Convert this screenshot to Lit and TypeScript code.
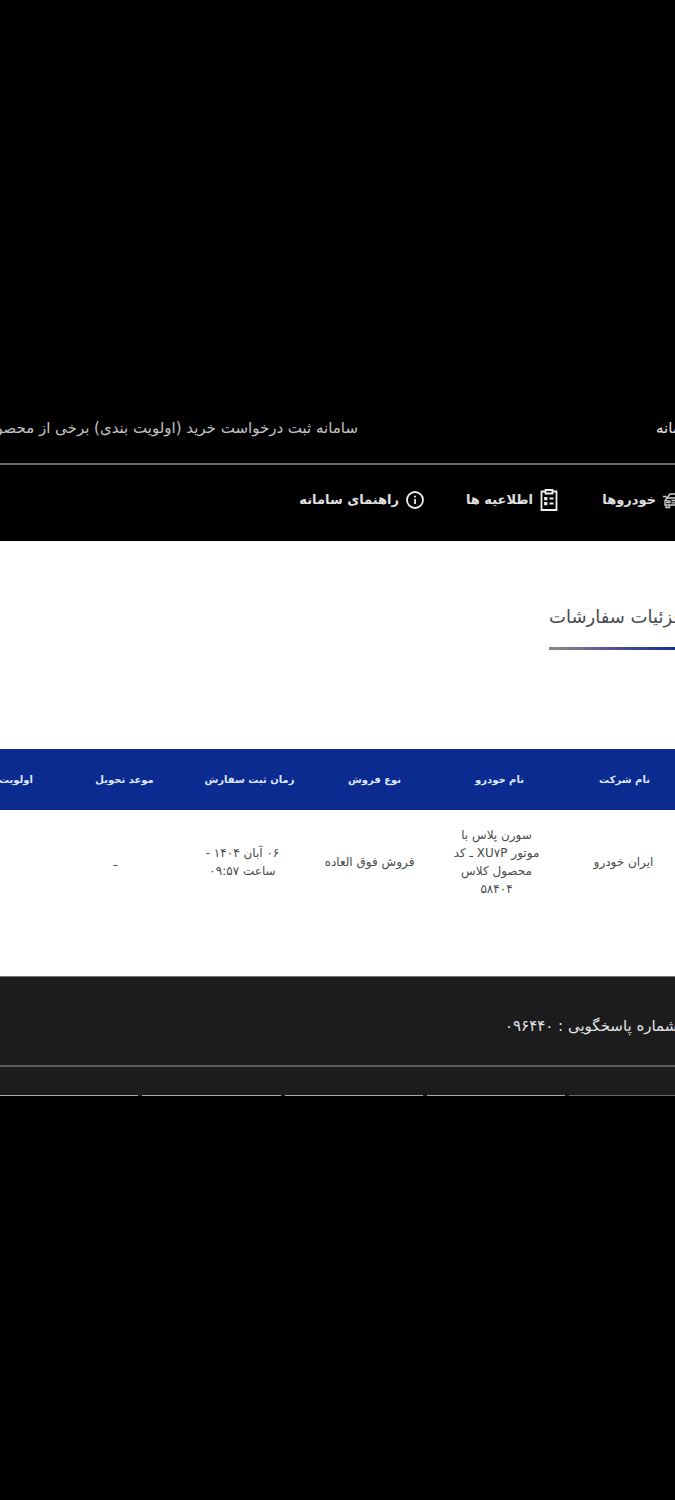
import { LitElement, html, css, svg } from "lit";
import { customElement } from "lit/decorators.js";

interface Order {
  company: string;
  car: string;
  saleType: string;
  orderedAt: string;
  delivery: string;
  priority: string;
}

const headings = ["نام شرکت", "نام خودرو", "نوع فروش", "زمان ثبت سفارش", "موعد تحویل", "اولویت"];

const orders: Order[] = [
  {
    company: "ایران خودرو",
    car: "سورن پلاس با موتور XU۷P ـ کد محصول کلاس ۵۸۴۰۴",
    saleType: "فروش فوق العاده",
    orderedAt: "۰۶ آبان ۱۴۰۴ - ساعت ۰۹:۵۷",
    delivery: "ـ",
    priority: "",
  },
];

const carIcon = svg`<svg class="car" viewBox="0 0 22 18" width="22" height="18" aria-hidden="true">
  <path d="M4 7 7 3h9l3 4M0 5.500h2.500L4 7M23 5.500h-2.500L19 7M4 7h15M4 7 2 9.500V14h19V9.500L19 7M3 14v2.500h3.500V14M16.500 14v2.500H20V14M3 9.500l4 .8v1.400H3M20 9.500l-4 .8v1.400h4M8.500 9.500H15M8.500 11.800H15"/>
</svg>`;

const clipboardIcon = svg`<svg viewBox="0 0 18 24" width="18" height="24" aria-hidden="true">
  <path d="M5 3.500H1.500V22h15V3.500H13M5.500 2h7v3.500h-7zM9.500 10.500h4M9.500 15.500h4"/>
  <path d="M5 9.800h1.500v1.500H5zM5 14.800h1.500v1.500H5z"/>
</svg>`;

const infoIcon = svg`<svg viewBox="0 0 18 18" width="18" height="18" aria-hidden="true">
  <circle cx="9" cy="9" r="8"/>
  <path d="M9 8v5M9 4.800v1.600"/>
</svg>`;

@customElement("app-root")
export class AppRoot extends LitElement {
  static styles = css`
    :host {
      display: block;
      min-height: 100vh;
      overflow: hidden;
      background: #000;
      color: #4a4a4a;
      font-family: "DejaVu Sans", sans-serif;
      font-size: 12px;
      line-height: 18px;
    }
    .page {
      margin: 404px -100px 0 0;
    }
    .topbar {
      display: flex;
      height: 59px;
      border-bottom: 2px solid #6b6b6b;
      color: #c4c4c4;
      font-size: 15px;
      line-height: 48px;
      white-space: nowrap;
    }
    .brand {
      flex: none;
      width: 119px;
      margin-left: 298px;
      color: #e4e4e4;
      text-align: left;
    }
    .nav {
      display: grid;
      grid-template-columns: 127px 134px 134px;
      align-items: center;
      height: 70px;
      padding: 0 90px 6px 0;
    }
    .nav a {
      display: flex;
      align-items: center;
      gap: 7px;
      color: #e0e0e0;
      font-size: 13px;
      font-weight: 700;
      text-decoration: none;
      white-space: nowrap;
    }
    svg {
      flex: none;
      fill: none;
      stroke: #eee;
      stroke-width: 1.8;
    }
    .car {
      stroke: #d0d0d0;
      stroke-width: 1.3;
    }
    .content {
      padding: 58px 0 63px;
      background: #fff;
    }
    .title {
      width: 226px;
      height: 48px;
      margin: 0 0 99px;
      border-bottom: 3px solid;
      border-image: linear-gradient(to left, #0b2b90 40%, #33468a 60%, #5f5796 75%, #858585 95%) 1;
      color: #4a4a50;
      font-size: 18px;
      font-weight: 400;
      line-height: 36px;
      text-align: left;
      white-space: nowrap;
    }
    .orders,
    .orders thead,
    .orders tbody {
      display: block;
    }
    .orders tr {
      display: grid;
      align-items: center;
      padding-right: 88px;
      text-align: center;
    }
    .orders thead tr {
      grid-template-columns: repeat(6, 125px);
      min-height: 61px;
      background: #0b2b90;
    }
    .orders tbody tr {
      grid-template-columns: repeat(6, 127px);
      min-height: 103px;
    }
    .orders th {
      padding: 0;
      color: #dfe8ff;
      font-size: 10px;
      font-weight: 700;
      white-space: nowrap;
    }
    .orders th:last-child {
      padding-right: 29px;
      text-align: right;
    }
    .orders td {
      padding: 0 16px;
    }
    .footer {
      background: #1c1c1e;
      color: #e4e4e4;
      border-top: 1px solid #777;
    }
    .support {
      height: 88px;
      border-bottom: 2px solid #5c5c5c;
    }
    .support p {
      width: 270px;
      margin: 0;
      padding-top: 25px;
      font-size: 15px;
      line-height: 48px;
      text-align: left;
      white-space: nowrap;
    }
    .cards {
      display: grid;
      grid-template-columns: 206px repeat(4, 1fr);
      gap: 4px;
      padding-top: 28px;
    }
    .cards span {
      height: 1px;
      background: #aaa;
    }
    .cards span:first-child {
      background: #666;
    }
  `;

  render() {
    return html`
      <div class="page" dir="rtl" lang="fa">
        <header>
          <div class="topbar">
            <span class="brand">سامانه</span>
            <span>سامانه ثبت درخواست خرید (اولویت بندی) برخی از محصولات</span>
          </div>
          <nav class="nav">
            <a href="#cars">${carIcon}<span>خودروها</span></a>
            <a href="#notices">${clipboardIcon}<span>اطلاعیه ها</span></a>
            <a href="#guide">${infoIcon}<span>راهنمای سامانه</span></a>
          </nav>
        </header>
        <main class="content">
          <h1 class="title">جزئیات سفارشات</h1>
          <table class="orders">
            <thead>
              <tr>
                ${headings.map((heading) => html`<th scope="col">${heading}</th>`)}
              </tr>
            </thead>
            <tbody>
              ${orders.map(
                (order) => html`<tr>
                  <td>${order.company}</td>
                  <td>${order.car}</td>
                  <td>${order.saleType}</td>
                  <td>${order.orderedAt}</td>
                  <td>${order.delivery}</td>
                  <td>${order.priority}</td>
                </tr>`
              )}
            </tbody>
          </table>
        </main>
        <footer class="footer">
          <div class="support"><p>شماره پاسخگویی : ۰۹۶۴۴۰</p></div>
          <div class="cards"><span></span><span></span><span></span><span></span><span></span></div>
        </footer>
      </div>
    `;
  }
}
